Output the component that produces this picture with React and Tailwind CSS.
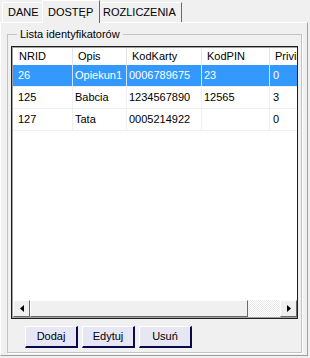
import React from 'react';

const rows = [
  ['26', 'Opiekun1', '0006789675', '23', '0'],
  ['125', 'Babcia', '1234567890', '12565', '3'],
  ['127', 'Tata', '0005214922', '', '0'],
];

function Arrow({ dir }) {
  return (
    <svg width="4" height="7" viewBox="0 0 4 7">
      {dir === 'left' ? <path d="M4 0 L0 3.5 L4 7 Z" fill="#000" /> : <path d="M0 0 L4 3.5 L0 7 Z" fill="#000" />}
    </svg>
  );
}

export default function App() {
  return (
    <div className="w-[310px] h-[358px] bg-[#f0f0f0] font-['Liberation_Sans',Arial,sans-serif] text-[11px] text-black leading-none overflow-hidden">
      {/* Tabs */}
      <div className="flex items-end h-[22px] pl-[2px] relative z-10">
        <div className="h-[20px] w-[40px] flex items-center pl-[5px] border-t border-l border-white">
          DANE
        </div>
        <div className="h-[23px] w-[58px] -mb-[1px] flex items-start pt-[6px] pl-[5px] bg-[#f0f0f0] border-t border-l border-white border-r border-r-[#696969]">
          DOSTĘP
        </div>
        <div className="h-[20px] w-[82px] flex items-center pl-[3px] border-t border-white border-r border-r-[#696969]">
          ROZLICZENIA
        </div>
      </div>

      {/* Panel */}
      <div className="w-[308px] h-[334px] border border-white border-r-[#a0a0a0] border-b-[#a0a0a0] pl-[6px] pt-[11px]">
        <div className="relative w-[295px] h-[319px] border border-[#c3c3c3] shadow-[1px_1px_0_#fff] pl-[3px] pt-[11px]">
          <span className="absolute left-[9px] -top-[7px] px-[3px] bg-[#f0f0f0] leading-[13px]">Lista identyfikatorów</span>

          {/* List view */}
          <div className="w-[287px] h-[273px] border border-[#1e1e1e] bg-white">
            <div className="w-full h-full border border-[#a0a0a0] border-r-0 flex flex-col overflow-hidden">
              <div className="flex-1 overflow-hidden">
                <div className="flex h-[17px] w-[317px]">
                  <div className="w-[60px] shrink-0 flex items-center pl-[6px] border-r border-[#e5e5e5]">NRID</div>
                  <div className="w-[54px] shrink-0 flex items-center pl-[5px] border-r border-[#e5e5e5]">Opis</div>
                  <div className="w-[75px] shrink-0 flex items-center pl-[5px] border-r border-[#e5e5e5]">KodKarty</div>
                  <div className="w-[68px] shrink-0 flex items-center pl-[5px] border-r border-[#e5e5e5]">KodPIN</div>
                  <div className="w-[60px] shrink-0 flex items-center pl-[5px]">Privil</div>
                </div>
                {rows.map((r, i) => (
                  <div
                    key={r[0]}
                    className={`flex h-[22px] w-[317px] border-b ${i === 0 ? 'bg-[#3399ff] text-white border-[#f0f0f0]' : 'border-[#f0f0f0]'}`}
                  >
                    <div className={`w-[60px] shrink-0 flex items-center pl-[5px] border-r ${i === 0 ? 'border-[#cfe4ff]' : 'border-[#f0f0f0]'}`}>{r[0]}</div>
                    <div className={`w-[54px] shrink-0 flex items-center pl-[2px] border-r ${i === 0 ? 'border-[#cfe4ff]' : 'border-[#f0f0f0]'}`}>{r[1]}</div>
                    <div className={`w-[75px] shrink-0 flex items-center pl-[2px] border-r ${i === 0 ? 'border-[#cfe4ff]' : 'border-[#f0f0f0]'}`}>{r[2]}</div>
                    <div className={`w-[68px] shrink-0 flex items-center pl-[2px] border-r ${i === 0 ? 'border-[#cfe4ff]' : 'border-[#f0f0f0]'}`}>{r[3]}</div>
                    <div className="w-[60px] shrink-0 flex items-center pl-[3px]">{r[4]}</div>
                  </div>
                ))}
              </div>

              {/* Horizontal scrollbar */}
              <div className="flex h-[17px] shrink-0">
                <div className="w-[17px] flex items-center justify-center bg-[#f0f0f0] border border-t-white border-l-white border-r-[#696969] border-b-[#696969]">
                  <Arrow dir="left" />
                </div>
                <div className="w-[218px] bg-[#f0f0f0] border border-t-white border-l-white border-r-[#696969] border-b-[#696969]" />
                <div className="w-[32px] bg-[repeating-conic-gradient(#ffffff_0_25%,#e8e8e8_0_50%)] bg-[length:2px_2px]" />
                <div className="w-[17px] flex items-center justify-center bg-[#f0f0f0] border border-t-white border-l-white border-r-[#696969] border-b-[#696969]">
                  <Arrow dir="right" />
                </div>
              </div>
            </div>
          </div>

          {/* Buttons */}
          <div className="flex gap-[4px] mt-[7px] ml-[14px]">
            {['Dodaj', 'Edytuj', 'Usuń'].map((b) => (
              <button
                key={b}
                className="w-[53px] h-[22px] bg-[#e6e6f5] border-t border-l border-white border-r-2 border-b-2 border-r-[#0a0a4a] border-b-[#0a0a4a] flex items-center justify-center"
              >
                {b}
              </button>
            ))}
          </div>
        </div>
      </div>
    </div>
  );
}
